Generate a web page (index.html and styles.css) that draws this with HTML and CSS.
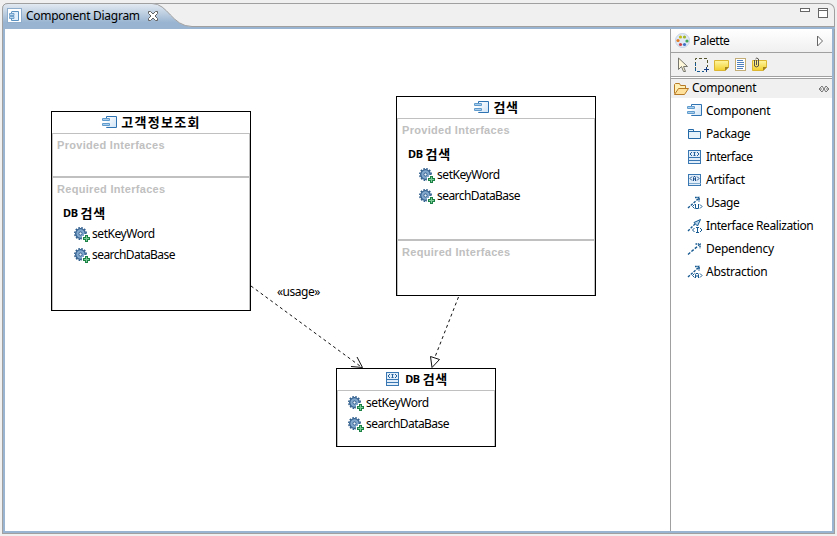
FILE: index.html
```html
<!DOCTYPE html>
<html lang="ko">
<head>
<meta charset="utf-8">
<title>Component Diagram</title>
<link rel="stylesheet" href="styles.css">
</head>
<body>
<svg class="defs" width="0" height="0">
  <defs>
    <linearGradient id="tabfill" x1="0" y1="0" x2="0" y2="1"><stop offset="0" stop-color="#e4ebf2"/><stop offset=".75" stop-color="#99b4d1"/><stop offset="1" stop-color="#99b4d1"/></linearGradient>
    <linearGradient id="boxfill" x1="0" y1="0" x2="1" y2="1"><stop offset="0" stop-color="#fff"/><stop offset="1" stop-color="#cfe3f6"/></linearGradient>
    <linearGradient id="notefill" x1="0" y1="0" x2="0" y2="1"><stop offset="0" stop-color="#fff6a0"/><stop offset="1" stop-color="#f2cf2d"/></linearGradient>
    <symbol id="component" viewBox="0 0 16 16"><path d="M4.500 3V1.500h10v11h-10V12" fill="url(#boxfill)" stroke="#2f73b3"/><rect x="0" y="3" width="8" height="3" rx="1" fill="#5f9bcc"/><rect x="0" y="8" width="8" height="3" rx="1" fill="#5f9bcc"/><path d="M1 4.500h6M1 9.500h6" stroke="#a9cdea"/></symbol>
    <symbol id="interface" viewBox="0 0 16 16"><rect x="1.500" y="1.500" width="12" height="13" fill="#e2effb" stroke="#3977b2"/><path d="M1 8.500h13M1 11.500h13" stroke="#3977b2"/><path d="M5 3L3 5l2 2M10 3l2 2-2 2M6.500 3.500h2M6.500 6.500h2M7.500 3v4" fill="none" stroke="#225f9d"/></symbol>
    <symbol id="artifact" viewBox="0 0 16 16"><rect x="1.500" y="2.500" width="12" height="11" fill="#e2effb" stroke="#3977b2"/><path d="M2 11.500h12" stroke="#7eaad0"/><path d="M5 4.500l-2 2 2 2M10 4.500l2 2-2 2M6.500 9V5.500L7 4.500h1l.5 1V9M6.500 7h2" fill="none" stroke="#1b4f8c"/></symbol>
    <symbol id="package" viewBox="0 0 16 16"><path d="M1.500 12.500v-9h5v2h7v7z" fill="#e5f1fb" stroke="#2469a7"/><path d="M2 5.500h11" stroke="#2469a7"/></symbol>
    <symbol id="operation" viewBox="0 0 16 16"><circle cx="6.500" cy="6.500" r="4.800" fill="#83a8cd" stroke="#315f8e" stroke-width="1.300"/><circle cx="6.500" cy="6.500" r="5.800" fill="none" stroke="#315f8e" stroke-width="1.400" stroke-dasharray="1.700 1.340"/><circle cx="6.500" cy="6.500" r="1.600" fill="#eef5fb" stroke="#315f8e"/><path d="M8 9h2V7h4v2h2v5h-2v2h-4v-2H8z" fill="#fff"/><path d="M9 10h2V8h3v2h2v3h-2v2h-3v-2H9z" fill="#1c8145"/><path d="M10 11.500h5M12.500 9v5" stroke="#7ccc97"/></symbol>
    <symbol id="dependency" viewBox="0 0 16 16"><path d="M1 13.500L12 4" stroke="#175a91" stroke-width="1.400" stroke-dasharray="3 1.500"/><path d="M8.500 3h4.500v4.500" fill="none" stroke="#175a91" stroke-width="1.500" stroke-dasharray="1.500 .7"/></symbol>
    <symbol id="mini" viewBox="0 0 16 16"><path d="M1 13L11 4" stroke="#175a91" stroke-width="1.400" stroke-dasharray="2.500 1.300"/><path d="M8 2.500h4v4" fill="none" stroke="#175a91" stroke-width="1.600" stroke-dasharray="1.800 .5"/><path d="M7.500 9.500l-2 2 2 2M13 9.500l2 2-2 2" fill="none" stroke="#175a91"/></symbol>
    <symbol id="usage" viewBox="0 0 16 16"><use href="#mini"/><path d="M8.500 9v4.500h3V9" fill="none" stroke="#175a91"/></symbol>
    <symbol id="abstraction" viewBox="0 0 16 16"><use href="#mini"/><path d="M8.500 14v-3.500l.5-1h2l.5 1V14M9 12h2" fill="none" stroke="#175a91"/></symbol>
    <symbol id="realization" viewBox="0 0 16 16"><path d="M1 13L9 5" stroke="#175a91" stroke-width="1.400" stroke-dasharray="2.500 1.300"/><path d="M13.500 1.500L7 4.500l3.500 3.500z" fill="#b9d7ef" stroke="#175a91"/><path d="M7.500 10l-2 2 2 2M13 10l2 2-2 2M9 9.500h3M9 14.500h3M10.500 9v6" fill="none" stroke="#175a91"/></symbol>
    <symbol id="note" viewBox="0 0 16 16"><path d="M.5 3.500h14v6.500L11 13.500H.5z" fill="url(#notefill)" stroke="#dbb632"/><path d="M15 10H11v4z" fill="#a58519"/></symbol>
  </defs>
</svg>
<div class="window">
  <header class="tabs">
    <svg class="tabshape" width="833" height="26" viewBox="0 0 833 26"><path d="M.5 26V6Q.5.5 6 .5H150C166 .5 170 23.500 190 23.500H833V26z" fill="url(#tabfill)"/><path d="M.5 26V6Q.5.500 6 .500H150C166 .500 170 23.500 190 23.500H833" fill="none" stroke="#a0a0a0"/></svg>
    <div class="tab">
      <svg width="16" height="16" viewBox="0 0 16 16"><rect x=".5" y=".5" width="14" height="14" fill="#fff" stroke="#8eaccb"/><path d="M5 3.500h6.500v9H4.500V10M4.500 5V3.500" fill="#e3effa" stroke="#5b91c0"/><path d="M2.500 5.500H7v2H2.500zM2.500 8.500H7v2H2.500z" fill="#b9d7ef" stroke="#5b91c0" stroke-width=".8"/></svg>
      <span>Component Diagram</span>
      <svg class="close" width="12" height="12" viewBox="0 0 12 12"><path d="M1.500 1.500h2L6 4l2.500-2.500h2v2L8 6l2.500 2.500v2h-2L6 8l-2.500 2.500h-2v-2L4 6 1.500 3.500z" fill="#fff" stroke="#626262"/></svg>
    </div>
    <svg class="controls" width="30" height="14" viewBox="0 0 30 14"><rect x=".5" y="2.500" width="9" height="3" fill="#fff" stroke="#666"/><rect x="18.500" y="2.500" width="9" height="9" fill="#fff" stroke="#666"/><path d="M18 4.500h10" stroke="#666"/></svg>
  </header>
  <div class="editor">
    <main class="canvas">
      <section class="node customer">
        <h2><svg width="16" height="16"><use href="#component"/></svg><b class="name">고객정보조회</b></h2>
        <div class="part provided"><h3>Provided Interfaces</h3></div>
        <div class="part required"><h3>Required Interfaces</h3>
          <h4>DB <b>검색</b></h4>
          <p><svg width="16" height="16"><use href="#operation"/></svg><span class="set">setKeyWord</span></p>
          <p><svg width="16" height="16"><use href="#operation"/></svg><span class="search">searchDataBase</span></p>
        </div>
      </section>
      <section class="node finder">
        <h2><svg width="16" height="16"><use href="#component"/></svg><b>검색</b></h2>
        <div class="part provided"><h3>Provided Interfaces</h3>
          <h4>DB <b>검색</b></h4>
          <p><svg width="16" height="16"><use href="#operation"/></svg><span class="set">setKeyWord</span></p>
          <p><svg width="16" height="16"><use href="#operation"/></svg><span class="search">searchDataBase</span></p>
        </div>
        <div class="part required"><h3>Required Interfaces</h3></div>
      </section>
      <section class="node database">
        <h2><svg width="16" height="16"><use href="#interface"/></svg><span class="db">DB</span><b>검색</b></h2>
        <div class="part operations">
          <p><svg width="16" height="16"><use href="#operation"/></svg><span class="set">setKeyWord</span></p>
          <p><svg width="16" height="16"><use href="#operation"/></svg><span class="search">searchDataBase</span></p>
        </div>
      </section>
      <svg class="links" width="665" height="502" viewBox="5 29 665 502"><g fill="none" stroke="#111"><path d="M251 286L362 367.500" stroke-dasharray="3 3"/><path d="M351 366.500L362.500 367.500L357 357"/><path d="M458.500 297L435 357" stroke-dasharray="3 3"/><path d="M430.500 356.500L439.500 359.500L432 367.500z" fill="#fff"/></g></svg>
      <span class="linklabel">«usage»</span>
    </main>
    <aside class="palette">
      <div class="palhead">
        <svg width="16" height="16" viewBox="0 0 16 16"><circle cx="7.500" cy="7.500" r="7" fill="#e0e9f6" stroke="#c5d1e4"/><circle cx="5.500" cy="4" r="1.600" fill="#c5bd16"/><circle cx="9.500" cy="4" r="1.600" fill="#a0b52b"/><circle cx="3" cy="7.500" r="1.600" fill="#e27b24"/><circle cx="12" cy="8" r="1.600" fill="#44a456"/><circle cx="5.500" cy="11.500" r="1.600" fill="#ce4545"/><circle cx="9.500" cy="11.500" r="1.600" fill="#416fc4"/></svg>
        <span>Palette</span>
        <svg class="arrow" width="8" height="12" viewBox="0 0 8 12"><path d="M1.500 1v10l5-5z" fill="#fff" stroke="#666"/></svg>
      </div>
      <div class="tools">
        <svg width="16" height="16" viewBox="0 0 16 16"><path d="M3.500 1v11.500l3-3 2 5h2l-2-5h4z" fill="#fff8da" stroke="#77766e"/></svg>
        <svg width="16" height="16" viewBox="0 0 16 16"><path d="M1.500 13V1.500h12V10" fill="none" stroke="#54542c" stroke-dasharray="3 2"/><path d="M1.500 6v8.500H10" fill="none" stroke="#175a91" stroke-dasharray="3 2"/><path d="M10 12.500h5M12.500 10v5" stroke="#163d80"/></svg>
        <svg width="16" height="16"><use href="#note"/></svg>
        <svg width="16" height="16" viewBox="0 0 16 16"><rect x="2.500" y="1.500" width="10" height="12" fill="#fff" stroke="#c1ad75"/><path d="M4 3.500h6M4 5.500h7M4 7.500h7M4 9.500h7M4 11.500h6" stroke="#4e80bd"/></svg>
        <svg width="16" height="16" viewBox="0 0 16 16"><use href="#note"/><path d="M2.500 3v6q1.500 2 4 0V2Q4.500 0 3.500 2M4.500 3v5" fill="none" stroke="#55514b"/></svg>
      </div>
      <div class="drawer">
        <svg width="16" height="16" viewBox="0 0 16 16"><path d="M1.500 12.500v-9l1-1h4l1 2h5v3" fill="#fff0b5" stroke="#b77b28"/><path d="M1.500 13.500l4-6h10l-4 6z" fill="#ffe19b" stroke="#b77b28"/></svg>
        <span class="component">Component</span>
        <svg class="pin" width="12" height="8" viewBox="0 0 12 8"><path d="M4 1L1 4l3 3 4-6 3 3-3 3zM2 4h2M8 4h2" fill="none" stroke="#666" stroke-width=".9"/></svg>
      </div>
      <ul>
        <li><svg width="16" height="16"><use href="#component"/></svg><span class="component">Component</span></li>
        <li><svg width="16" height="16"><use href="#package"/></svg><span class="t-package">Package</span></li>
        <li><svg width="16" height="16"><use href="#interface"/></svg><span class="t-interface">Interface</span></li>
        <li><svg width="16" height="16"><use href="#artifact"/></svg><span class="t-artifact">Artifact</span></li>
        <li><svg width="16" height="16"><use href="#usage"/></svg><span class="t-usage">Usage</span></li>
        <li><svg width="16" height="16"><use href="#realization"/></svg><span class="t-real">Interface Realization</span></li>
        <li><svg width="16" height="16"><use href="#dependency"/></svg><span class="t-dep">Dependency</span></li>
        <li><svg width="16" height="16"><use href="#abstraction"/></svg><span class="t-abs">Abstraction</span></li>
      </ul>
    </aside>
  </div>
</div>
</body>
</html>
```

FILE: styles.css
```css
* { box-sizing: border-box; }
body { margin: 0; width: 837px; height: 536px; padding: 3px 2px 2px; overflow: hidden; background: #f0f0f0; color: #000; font: 12px/16px "Noto Sans", "Noto Sans CJK KR", sans-serif; }
svg { display: block; flex: none; }
.defs { position: absolute; }
h2, h3, h4, p, ul { margin: 0; padding: 0; font-size: 12px; }
b { font-family: "Noto Sans CJK KR", sans-serif; font-weight: 700; }

.window { width: 833px; height: 531px; }
.tabs { position: relative; display: flex; justify-content: space-between; height: 24px; border-right: 1px solid #a0a0a0; border-top: 1px solid #a0a0a0; border-radius: 6px 7px 0 0; }
.tabshape { position: absolute; left: 0; top: -1px; }
.tab { position: relative; display: flex; align-items: center; height: 23px; padding-left: 5px; }
.tab span { width: 124px; padding-left: 3px; white-space: nowrap; letter-spacing: -.27px; }
.controls { position: relative; margin: 2px 4px 0 0; }

.editor { display: flex; height: 507px; padding: 0 1px 1px; border-top: 2px solid #99b4d1; background: #a0a0a0; }
.canvas { position: relative; width: 667px; background: #fff; border: solid #99b4d1; border-width: 0 0 2px 2px; }
.palette { width: 164px; background: #fff; border: solid #99b4d1; border-width: 0 2px 2px 0; box-shadow: inset 1px 0 #a0a0a0; }

.node { position: absolute; width: 200px; height: 200px; border: 1px solid #000; background: #fff; }
.customer { left: 46px; top: 82px; }
.finder { left: 391px; top: 67px; }
.database { left: 331px; top: 339px; width: 160px; height: 79px; }
.node h2 { display: flex; align-items: center; justify-content: center; gap: 3px; height: 21px; padding: 0 0 2px 1px; }
.node h2 svg { margin-top: 2px; }
.node h2 b { font-size: 13px; letter-spacing: .6px; line-height: 15px; }
.node h2 .name { letter-spacing: 1.300px; }
.node .db { font-size: 11px; letter-spacing: -.4px; }
.database h2 svg { margin: 1px 1px 0 0; }
.part { border: solid #c0c0c0; border-width: 1px 1px 0; padding: 3px 4px 0; }
.part h3 { height: 16px; color: #c0c0c0; font: bold 11px/16px "Liberation Sans", sans-serif; letter-spacing: .3px; white-space: nowrap; }
.part + .part { border-top-width: 2px; }
.customer .provided { height: 43px; }
.customer .required { height: 134px; }
.finder .provided { height: 121px; }
.finder .required { height: 56px; }
.database .operations { height: 56px; padding: 1px 5px 0; }
.node h4 { display: flex; gap: 3px; height: 26px; padding: 8px 0 0 6px; font-size: 11px; line-height: 16px; letter-spacing: -.4px; }
.node h4 b { font-size: 13px; letter-spacing: .6px; line-height: 15px; }
.node p { display: flex; height: 21px; align-items: center; gap: 2px; padding-left: 17px; }
.node p svg { margin-top: 2px; }
.node .operations p { padding-left: 5px; }
.set { letter-spacing: -.44px; }
.search { letter-spacing: -.56px; }

.links { position: absolute; inset: 0; }
.linklabel { position: absolute; left: 272px; top: 255px; letter-spacing: -.5px; }

.palhead { display: flex; align-items: center; height: 24px; padding: 0 8px 0 5px; border-bottom: 1px solid #a0a0a0; background: linear-gradient(#fff, #f0f0f0); box-shadow: inset 1px 0 #a0a0a0; }
.palhead span { padding-left: 2px; letter-spacing: -.4px; }
.arrow { margin-left: auto; }
.tools { display: flex; align-items: center; gap: 3px; height: 24px; padding-left: 5px; background: #f0f0f0; border-bottom: 1px solid #a0a0a0; box-shadow: inset 1px 0 #a0a0a0; }
.tools svg:nth-child(n+3) { position: relative; left: 1px; }
.drawer { display: flex; align-items: center; height: 20px; margin: 1px 0 0 1px; padding: 0 2px 2px; background: #f0f0f0; border-top: 1px solid #a0a0a0; }
.drawer span { padding-left: 3px; }
.drawer svg { margin-top: 2px; }
.drawer .pin { margin-left: auto; }
ul { list-style: none; padding: 1px 0 0 17px; }
li { display: flex; align-items: center; height: 23px; gap: 3px; white-space: nowrap; }
.component { letter-spacing: -.26px; }
.t-package, .t-real, .t-usage { letter-spacing: -.4px; }
.t-interface { letter-spacing: -.5px; }
.t-artifact, .t-dep, .t-abs { letter-spacing: -.28px; }
```
